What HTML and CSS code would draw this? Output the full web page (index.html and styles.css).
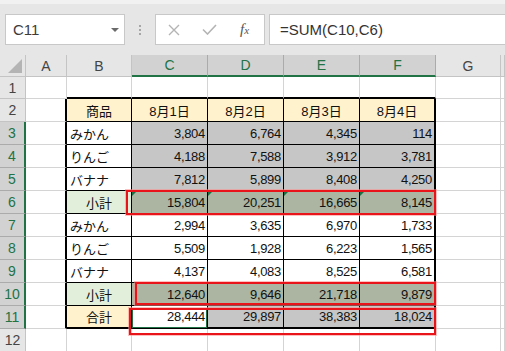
FILE: index.html
```html
<!DOCTYPE html>
<html lang="ja">
<head>
<meta charset="utf-8">
<link rel="stylesheet" href="styles.css">
</head>
<body>
<div class="top"></div>
<div class="fbar">
  <div class="namebox"><span>C11</span><span class="arrow"></span></div>
  <div class="sep"><i></i><i></i><i></i></div>
  <div class="iconbox">
    <svg class="ic-x" width="12" height="12" viewBox="0 0 12 12"><path d="M1 1L11 11M11 1L1 11" stroke="#b4b4b4" stroke-width="1.4" fill="none"/></svg>
    <svg class="ic-ok" width="15" height="11" viewBox="0 0 15 11"><path d="M1 5.5L5.5 10L14 1" stroke="#b4b4b4" stroke-width="1.6" fill="none"/></svg>
    <span class="fx"><i>f</i><em>x</em></span>
  </div>
  <div class="formula">=SUM(C10,C6)</div>
</div>
<div class="sheet">
  <div class="ch corner"></div><div class="ch">A</div><div class="ch">B</div><div class="ch sel">C</div><div class="ch sel">D</div><div class="ch sel">E</div><div class="ch sel">F</div><div class="ch">G</div><div class="ch"></div>

  <div class="rh">1</div><div class="c"></div><div class="c tt"></div><div class="c tt"></div><div class="c tt"></div><div class="c tt"></div><div class="c tt"></div><div class="c"></div><div class="c"></div>

  <div class="rh">2</div><div class="c tl"></div><div class="t hdr ctr">商品</div><div class="t hdr ctr">8月1日</div><div class="t hdr ctr">8月2日</div><div class="t hdr ctr">8月3日</div><div class="t hdr ctr tr">8月4日</div><div class="c"></div><div class="c"></div>

  <div class="rh sel">3</div><div class="c tl"></div><div class="t lbl">みかん</div><div class="t gy num">3,804</div><div class="t gy num">6,764</div><div class="t gy num">4,345</div><div class="t gy num tr">114</div><div class="c"></div><div class="c"></div>

  <div class="rh sel">4</div><div class="c tl"></div><div class="t lbl">りんご</div><div class="t gy num">4,188</div><div class="t gy num">7,588</div><div class="t gy num">3,912</div><div class="t gy num tr">3,781</div><div class="c"></div><div class="c"></div>

  <div class="rh sel">5</div><div class="c tl"></div><div class="t lbl">バナナ</div><div class="t gy num">7,812</div><div class="t gy num">5,899</div><div class="t gy num">8,408</div><div class="t gy num tr">4,250</div><div class="c"></div><div class="c"></div>

  <div class="rh sel">6</div><div class="c tl"></div><div class="t grn ctr">小計</div><div class="t gg num tri">15,804</div><div class="t gg num tri">20,251</div><div class="t gg num tri">16,665</div><div class="t gg num tri tr">8,145</div><div class="c"></div><div class="c"></div>

  <div class="rh sel">7</div><div class="c tl"></div><div class="t lbl">みかん</div><div class="t num">2,994</div><div class="t num">3,635</div><div class="t num">6,970</div><div class="t num tr">1,733</div><div class="c"></div><div class="c"></div>

  <div class="rh sel">8</div><div class="c tl"></div><div class="t lbl">りんご</div><div class="t num">5,509</div><div class="t num">1,928</div><div class="t num">6,223</div><div class="t num tr">1,565</div><div class="c"></div><div class="c"></div>

  <div class="rh sel">9</div><div class="c tl"></div><div class="t lbl">バナナ</div><div class="t num">4,137</div><div class="t num">4,083</div><div class="t num">8,525</div><div class="t num tr">6,581</div><div class="c"></div><div class="c"></div>

  <div class="rh sel">10</div><div class="c tl"></div><div class="t grn ctr">小計</div><div class="t gg num">12,640</div><div class="t gg num">9,646</div><div class="t gg num">21,718</div><div class="t gg num tr">9,879</div><div class="c"></div><div class="c"></div>

  <div class="rh sel">11</div><div class="c tl"></div><div class="t hdr ctr tb">合計</div><div class="t num tb act">28,444</div><div class="t gy num tb">29,897</div><div class="t gy num tb">38,383</div><div class="t gy num tb tr">18,024</div><div class="c"></div><div class="c"></div>

  <div class="rh">12</div><div class="c"></div><div class="c"></div><div class="c"></div><div class="c"></div><div class="c"></div><div class="c"></div><div class="c"></div><div class="c"></div>

  <div class="mark m1"></div>
  <div class="mark m2"></div>
  <div class="mark m3"></div>
</div>
</body>
</html>
```
FILE: styles.css
```css
* { box-sizing: border-box; margin: 0; padding: 0; }
html, body { width: 505px; height: 351px; overflow: hidden; }
body {
  background: #fff;
  font-family: "Liberation Sans", "Noto Sans CJK JP", sans-serif;
  color: #111;
}
.top { height: 4px; background: #f1f1f1; }
.fbar {
  height: 51px;
  background: #e6e6e6;
  display: flex;
  align-items: flex-start;
  padding: 10px 0 0 5px;
}
.namebox {
  width: 120px; height: 31px;
  background: #fff;
  border: 1px solid #c8c8c8;
  display: flex; align-items: center;
  padding-left: 7px;
  font-size: 15px; color: #3c3c3c;
}
.arrow {
  margin-left: auto; margin-right: 5px;
  width: 0; height: 0;
  border-top: 4px solid #6a6a6a;
  border-left: 4px solid transparent;
  border-right: 4px solid transparent;
}
.sep {
  width: 30px; height: 31px;
  display: flex; flex-direction: column; align-items: center;
  padding-top: 11px; gap: 2px;
}
.sep i { width: 2px; height: 2px; background: #a6a6a6; display: block; }
.iconbox {
  width: 110px; height: 31px;
  background: #fff;
  border: 1px solid #c8c8c8;
  display: flex; align-items: center;
  padding-left: 12px;
}
.ic-x { margin-right: 22px; }
.ic-ok { margin-right: 23px; }
.fx { font-family: "Liberation Serif", serif; color: #555; font-size: 15px; }
.fx i { font-style: italic; }
.fx em { font-style: italic; font-size: 11px; margin-left: 0; }
.formula {
  flex: 1; height: 31px; margin-left: 4px;
  background: #fff;
  border: 1px solid #c8c8c8; border-right: none;
  display: flex; align-items: center;
  padding-left: 10px;
  font-size: 15px; color: #333;
}
.sheet {
  position: relative;
  display: grid;
  grid-template-columns: 26px 41px 65px 76px 76px 76px 76px 65px 1fr;
  grid-template-rows: 22px 22px repeat(11, 23px);
}
.ch, .rh {
  background: #e6e6e6;
  border-right: 1px solid #c4c4c4;
  border-bottom: 1px solid #c4c4c4;
  display: flex; align-items: center; justify-content: center;
  font-size: 14px; color: #444;
}
.ch.sel { background: #d2d2d2; color: #217346; border-bottom: 2px solid #217346; border-right-color: #ababab; }
.rh.sel { background: #d2d2d2; color: #217346; border-right: 2px solid #217346; border-bottom-color: #ababab; }
.corner { position: relative; }
.corner::after {
  content: ""; position: absolute; right: 3px; bottom: 3px;
  width: 0; height: 0;
  border-bottom: 14px solid #b4b4b4;
  border-left: 14px solid transparent;
}
.c {
  border-right: 1px solid #d4d4d4;
  border-bottom: 1px solid #d4d4d4;
}
.c.tt { border-bottom: 2px solid #000; }
.c.tl { border-right: 2px solid #000; }
.t {
  position: relative;
  border-right: 1px solid #000;
  border-bottom: 1px solid #000;
  display: flex; align-items: center;
  font-size: 13px;
  background: #fff;
}
.t.tr { border-right: 2px solid #000; }
.t.tb { border-bottom: 2px solid #000; }
.num { justify-content: flex-end; padding-right: 2px; letter-spacing: -0.3px; }
.lbl { padding-left: 3px; font-size: 13px; }
.ctr { justify-content: center; }
.hdr { background: #fff2cc; }
.grn { background: #e2efda; }
.gy { background: #c6c6c6; }
.gg { background: #abb5a2; }
.tri::before {
  content: ""; position: absolute; left: 0; top: 0;
  width: 0; height: 0;
  border-top: 5px solid #1e7145;
  border-right: 5px solid transparent;
}
.act::after {
  content: ""; position: absolute; left: 0; top: 3px; right: 0; bottom: -1px;
  border: 1px solid #1e7145;
}
.mark {
  position: absolute;
  border: 2px solid #e8141a;
  box-shadow: 0 0 0 1px rgba(255, 140, 140, 0.55);
}
.m1 { left: 126px; top: 135px; width: 310px; height: 25px; }
.m2 { left: 135px; top: 227px; width: 301px; height: 23px; }
.m3 { left: 129px; top: 253px; width: 307px; height: 27px; }
```
